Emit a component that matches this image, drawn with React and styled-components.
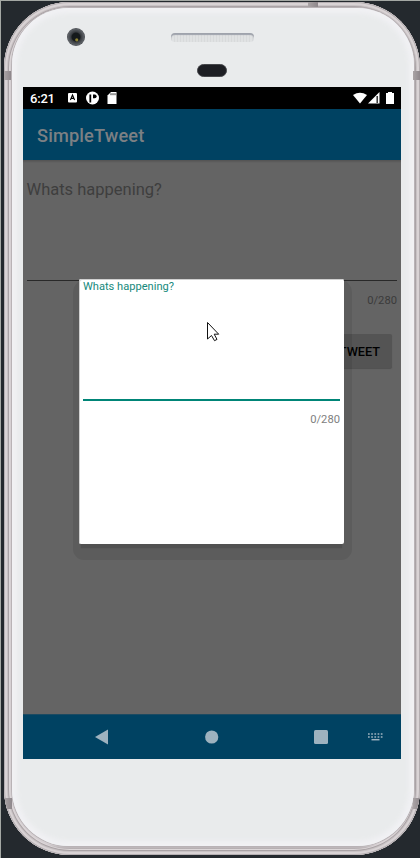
import React from 'react';
import styled, { createGlobalStyle } from 'styled-components';

const GlobalStyle = createGlobalStyle`
  * { box-sizing: border-box; }
  body { margin: 0; background: #24292e; font-family: Roboto, sans-serif; overflow: hidden; }
`;

const Backdrop = styled.main`
  width: 420px;
  height: 858px;
  padding: 2px 0 3px 4px;
  background: #24292e;
  box-shadow: inset 1px 1px 0 #a4a8a4;
  overflow: hidden;
`;

const Shell = styled.div`
  position: relative;
  height: 853px;
  padding: 6px 6px 9px 8px;
  border-radius: 66px;
  overflow: hidden;
  background: linear-gradient(180deg, #c5c1c4 0, #d6d0d3 12px, #d6d0d3 842px, #8a8284 853px);
  box-shadow: inset 0 0 0 1px #b5afb2, inset 0 0 0 3px #d9d3d5, inset 0 0 0 4px #c8c2c4,
    inset 0 0 0 5px #aaa3a6, inset 0 0 0 6px #ddd7d9;
`;

const Face = styled.div`
  height: 838px;
  padding: 0 0 0 11px;
  border-radius: 57px;
  background: #e9ebec;
  box-shadow: 0 0 0 1px #b9b3b6, inset 0 0 5px 5px #f1f1f4;
`;

const Band = styled.i`
  position: absolute;
  left: ${p => p.$x}px;
  top: ${p => p.$y}px;
  width: ${p => p.$w}px;
  height: ${p => p.$h}px;
  background: linear-gradient(90deg, #aaa4a6, #8e878b);
`;

const Forehead = styled.div`
  display: grid;
  grid-template-columns: 18px 83px;
  column-gap: 86px;
  height: 79px;
  padding: 20px 0 0 44px;
`;

const EarpieceColumn = styled.div`
  display: flex;
  flex-direction: column;
  align-items: center;
  gap: 22px;
  padding-top: 5px;
`;

const Camera = styled.i`
  height: 18px;
  border-radius: 50%;
  background: radial-gradient(circle at 54% 66%, #8d8232 0 1px, transparent 2px),
    radial-gradient(circle, #15191b 0 4px, #383b40 5px, #5d6166 8px, #46494e 9px);
`;

const Speaker = styled.i`
  width: 83px;
  height: 9px;
  border-radius: 4px;
  background: repeating-linear-gradient(90deg, #d8dadb 0 1px, #e0e2e3 1px 3px);
  box-shadow: inset 0 2px 1px #9fa3ac;
`;

const Sensor = styled.i`
  width: 30px;
  height: 13px;
  margin-right: 1px;
  border-radius: 7px;
  background: #1d1e23;
  border: 1px solid #46474b;
`;

const Screen = styled.section`
  position: relative;
  display: grid;
  grid-template-columns: 378px;
  grid-template-rows: 22px 51px 554px 45px;
  width: 378px;
  height: 672px;
  background: #646464;
`;

const StatusBar = styled.header`
  display: flex;
  align-items: center;
  justify-content: space-between;
  padding: 0 7px;
  background: #000;
  color: #fff;
  font-size: 13px;
  font-weight: 500;
  line-height: 22px;
`;

const StatusGroup = styled.div`
  display: flex;
  align-items: center;
  svg { display: block; }
`;

const Clock = styled.span`
  width: 37px;
  padding-top: 1px;
  letter-spacing: -0.2px;
`;

const AppBar = styled.div`
  padding-left: 14px;
  background: #004262;
  color: #7c8084;
  font-size: 18.2px;
  font-weight: 500;
  line-height: 53px;
  letter-spacing: 0.15px;
`;

const Compose = styled.div`
  padding: 0 4px;
  background: linear-gradient(#525252, #646464 3px);
`;

const Prompt = styled.div`
  height: 121px;
  padding-top: 18px;
  border-bottom: 1px solid #292929;
  color: #3e3e3e;
  font-size: 16.5px;
  line-height: 23px;
  text-indent: -0.5px;
`;

const Counter = styled.div`
  margin-top: ${p => (p.$light ? 12 : 13)}px;
  color: ${p => (p.$light ? '#808080' : '#3b3b3b')};
  font-size: 11.2px;
  line-height: 14px;
  text-align: right;
`;

const TweetButton = styled.button`
  display: block;
  width: 88px;
  height: 34px;
  margin: 26px 5px 0 auto;
  padding: 0 12px 0 0;
  border: 0;
  border-radius: 2px;
  background: #545454;
  box-shadow: 0 1px 1px #505050;
  color: #000;
  font: 500 12.7px/35px Roboto, sans-serif;
  text-align: right;
`;

const NavBar = styled.nav`
  display: grid;
  grid-template-columns: 110px 109px 54px 16px;
  align-items: center;
  padding: 0 0 1px 72px;
  background: #004262;
  border-top: 1px solid #1c4a61;
  svg { display: block; }
`;

const DialogShadow = styled.div`
  position: absolute;
  left: 50px;
  top: 192px;
  width: 279px;
  height: 281px;
  padding: 0 8px 16px 6px;
  border-radius: 14px 14px 11px 11px;
  background: rgba(0, 0, 0, 0.08);
`;

const Dialog = styled.div`
  height: 265px;
  padding: 0 4px;
  border-radius: 2px;
  background: #fff;
  box-shadow: inset 1px 1px 0 #d0d0d0, 0 6px 1px -2px #515151;
`;

const DialogPrompt = styled.div`
  height: 122px;
  border-bottom: 2px solid #008577;
  color: #16897c;
  font-size: 11.1px;
  line-height: 15px;
`;

const Pointer = styled.svg`
  position: absolute;
  left: 133px;
  top: 42px;
`;

export default function App() {
  return (
    <>
      <GlobalStyle />
      <Backdrop>
        <Shell>
          <Band $x={304} $y={0} $w={10} $h={5} />
          <Band $x={0} $y={69} $w={7} $h={9} />
          <Band $x={409} $y={69} $w={7} $h={9} />
          <Band $x={0} $y={796} $w={8} $h={11} />
          <Band $x={409} $y={796} $w={7} $h={11} />
          <Face>
            <Forehead>
              <Camera />
              <EarpieceColumn>
                <Speaker />
                <Sensor />
              </EarpieceColumn>
            </Forehead>
            <Screen>
              <StatusBar>
                <StatusGroup>
                  <Clock>6:21</Clock>
                  <svg width="54" height="14" viewBox="0 0 54 14">
                    <rect x="1" y="2" width="9" height="9.5" rx="1" fill="#fff" />
                    <path d="M3.4 9 5.5 4 7.6 9M4.2 7.4h2.6" fill="none" stroke="#000" strokeWidth="1.1" />
                    <circle cx="25.5" cy="7" r="6.5" fill="#fff" />
                    <path d="M23.3 3.5v8" stroke="#000" strokeWidth="1.8" />
                    <path d="M26 3.4h1.8q1.8 0 1.8 1.9t-1.8 1.9h-1.8z" fill="#000" />
                    <path d="M44 1h5.5v12h-9V4.5z" fill="#fff" />
                    <path d="M44 2.2v2M46 2.2v2M48 2.2v2" stroke="#000" strokeWidth="0.8" />
                  </svg>
                </StatusGroup>
                <StatusGroup>
                  <svg width="41" height="14" viewBox="0 0 41 14">
                    <path d="M0 4Q7-.5 14 4L7 12.5z" fill="#fff" />
                    <path d="M15 12.5 26.5 1v11.5z" fill="#fff" />
                    <path d="M24.2 5v7" stroke="#333" strokeWidth="1.5" />
                    <path d="M35 1h4v1h2v11h-8V2h2z" fill="#fff" />
                  </svg>
                </StatusGroup>
              </StatusBar>
              <AppBar>SimpleTweet</AppBar>
              <Compose>
                <Prompt>Whats happening?</Prompt>
                <Counter>0/280</Counter>
                <TweetButton>TWEET</TweetButton>
              </Compose>
              <NavBar>
                <svg width="14" height="16" viewBox="0 0 14 16">
                  <path d="M0 8 13 .5v15z" fill="#9db2bf" />
                </svg>
                <svg width="14" height="14" viewBox="0 0 14 14">
                  <circle cx="6.7" cy="7" r="6.6" fill="#9db2bf" />
                </svg>
                <svg width="14" height="14" viewBox="0 0 14 14">
                  <rect width="14" height="14" rx="1.5" fill="#9db2bf" />
                </svg>
                <svg width="16" height="8" viewBox="0 0 16 8">
                  <path d="M0 1h15M0 4h15" fill="none" stroke="#9db2bf" strokeWidth="1.3" strokeDasharray="1.7 1.5" />
                  <path d="M3.5 6.7h8" stroke="#9db2bf" strokeWidth="1.5" />
                </svg>
              </NavBar>
              <DialogShadow>
                <Dialog>
                  <DialogPrompt>Whats happening?</DialogPrompt>
                  <Counter $light>0/280</Counter>
                  <Pointer width="14" height="22" viewBox="0 0 14 22">
                    <path d="M1.5 1.5v16.5l4-3.5 3 5.2 2.5-1.3-2.8-5.2h4.5z" fill="#fff" stroke="#111" strokeWidth="1" />
                  </Pointer>
                </Dialog>
              </DialogShadow>
            </Screen>
          </Face>
        </Shell>
      </Backdrop>
    </>
  );
}
